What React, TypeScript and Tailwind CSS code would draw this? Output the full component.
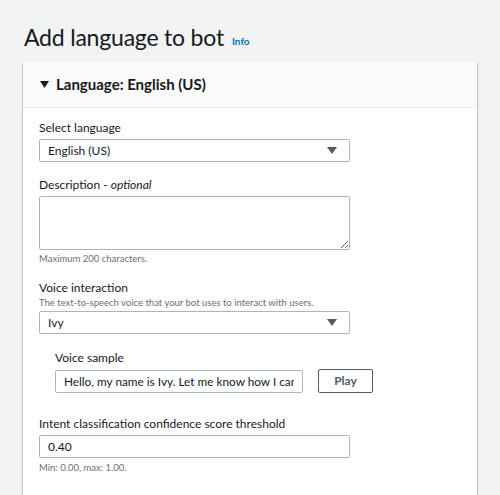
import { useState } from "react";

const font = { fontFamily: "Lato, 'Liberation Sans', Arial, sans-serif" };

function Caret() {
  return (
    <svg width="10" height="7" viewBox="0 0 10 7" className="shrink-0">
      <path d="M0 0 H10 L5 7 Z" fill="#545b64" />
    </svg>
  );
}

function SelectBox({ value }: { value: string }) {
  return (
    <div className="flex items-center justify-between w-[311px] h-[23px] border border-[#aab7b8] rounded-[2px] bg-white pl-[8px] pr-[12px]">
      <span className="text-[12px] text-[#16191f]">{value}</span>
      <Caret />
    </div>
  );
}

export default function App() {
  const [sample, setSample] = useState("Hello, my name is Ivy. Let me know how I can assist you.");
  const [threshold, setThreshold] = useState("0.40");

  return (
    <div className="min-h-[495px] bg-[#f2f3f3] text-[#16191f] pt-[24px]" style={font}>
      {/* Page title */}
      <div className="flex items-end gap-[8px] pl-[24px] h-[26px]">
        <h1 className="text-[23px] leading-[26px] font-normal tracking-[-0.2px]">Add language to bot</h1>
        <a className="text-[10px] font-bold text-[#0073bb] leading-[14px] mb-[2px]">Info</a>
      </div>

      {/* Card */}
      <div className="mx-[23px] mt-[12px] bg-white shadow-[0_1px_1px_0_rgba(0,28,36,0.3),1px_1px_1px_0_rgba(0,28,36,0.15),-1px_1px_1px_0_rgba(0,28,36,0.15)]">
        <div className="flex items-center gap-[7px] h-[46px] pl-[17px] bg-[#fafafa] border-b border-[#eaeded]">
          <svg width="9" height="7" viewBox="0 0 9 7">
            <path d="M0 0 H9 L4.5 7 Z" fill="#16191f" />
          </svg>
          <span className="text-[15px] font-bold">Language: English (US)</span>
        </div>

        <div className="pl-[16px] pt-[12px] pb-[24px]">
          <label className="block text-[12px] leading-[16px]">Select language</label>
          <div className="mt-[3px]">
            <SelectBox value="English (US)" />
          </div>

          <label className="block text-[12px] leading-[16px] mt-[15px]">
            Description - <i>optional</i>
          </label>
          <textarea className="block mt-[3px] w-[311px] h-[54px] border border-[#aab7b8] rounded-[2px] bg-white" />
          <p className="text-[9.5px] leading-[14px] text-[#687078] mt-[2px]">Maximum 200 characters.</p>

          <label className="block text-[12px] leading-[16px] mt-[14px]">Voice interaction</label>
          <p className="text-[9.5px] leading-[13px] text-[#687078]">
            The text-to-speech voice that your bot uses to interact with users.
          </p>
          <div className="mt-[2px]">
            <SelectBox value="Ivy" />
          </div>

          <div className="pl-[16px] mt-[16px]">
            <label className="block text-[12px] leading-[16px]">Voice sample</label>
            <div className="flex items-center gap-[15px] mt-[3px]">
              <input
                value={sample}
                onChange={(e) => setSample(e.target.value)}
                className="w-[248px] h-[23px] border border-[#aab7b8] rounded-[2px] bg-white px-[8px] text-[11.8px] text-[#16191f] outline-none"
                style={font}
              />
              <button className="w-[55px] h-[24px] border border-[#545b64] rounded-[2px] bg-white text-[12px] font-bold text-[#545b64]">
                Play
              </button>
            </div>
          </div>

          <label className="block text-[12px] leading-[16px] mt-[23px]">
            Intent classification confidence score threshold
          </label>
          <input
            value={threshold}
            onChange={(e) => setThreshold(e.target.value)}
            className="block mt-[3px] w-[311px] h-[23px] border border-[#aab7b8] rounded-[2px] bg-white px-[8px] text-[12px] text-[#16191f] outline-none"
            style={font}
          />
          <p className="text-[9.5px] leading-[14px] text-[#687078] mt-[3px]">Min: 0.00, max: 1.00.</p>
        </div>
      </div>
    </div>
  );
}
